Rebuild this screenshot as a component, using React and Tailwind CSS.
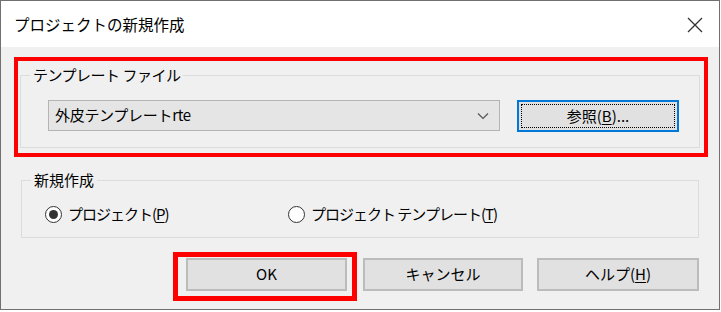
function Btn({ children, className = "" }) {
  return (
    <button
      className={
        "h-[33px] bg-[#e1e1e1] border-2 border-[#bcbcbc] text-[15px] text-black flex items-center justify-center " +
        className
      }
    >
      {children}
    </button>
  );
}

function Radio({ checked, children }) {
  return (
    <label className="flex items-center gap-[6px] text-[15px] leading-[18px]">
      <span className="w-[17px] h-[17px] rounded-full border border-[#333333] bg-white flex items-center justify-center">
        {checked && <span className="w-[9px] h-[9px] rounded-full bg-[#333333]" />}
      </span>
      <span className="tracking-[-1px]">{children}</span>
    </label>
  );
}

export default function App() {
  return (
    <div className="w-[721px] h-[312px] bg-white font-['Noto_Sans_CJK_JP',sans-serif] text-black">
      <div className="w-[720px] h-[310px] border border-[#707070] flex flex-col">
        {/* title bar */}
        <div className="h-[46px] bg-white flex items-center justify-between pl-[13px] pr-[16px]">
          <span className="text-[15.5px] pt-[1px]">プロジェクトの新規作成</span>
          <svg width="16" height="16" viewBox="0 0 16 16" className="mt-[2px]">
            <path d="M1 1 L15 15 M15 1 L1 15" stroke="#333" strokeWidth="1.3" fill="none" />
          </svg>
        </div>

        <div className="flex-1 bg-[#f0f0f0] pt-[10px]">
          {/* template file */}
          <div className="ml-[13px] w-[694px] h-[100px] border-4 border-[#ff0000] pt-[5px] pl-[2px]">
            <fieldset className="w-[680px] h-[82px] border border-[#dcdcdc] pl-[9px]">
              <legend className="px-[3px] text-[15px] leading-[18px] tracking-[-0.5px]">テンプレート ファイル</legend>
              <div className="flex mt-[16px] ml-[18px]">
                <div className="w-[452px] h-[31px] bg-[#e5e5e5] border border-[#b4b4b4] flex items-center justify-between pl-[6px] pr-[10px] text-[15px]">
                  <span className="tracking-[-0.3px]">外皮テンプレートrte</span>
                  <svg width="12" height="8" viewBox="0 0 12 8">
                    <path d="M1 1.5 L6 6.5 L11 1.5" stroke="#555" strokeWidth="1.2" fill="none" />
                  </svg>
                </div>
                <div className="ml-[17px] w-[162px] h-[32px] bg-[#e1e1e1] border-2 border-[#0078d7] p-[2px]">
                  <div className="w-full h-full border border-dotted border-black flex items-center justify-center text-[15px]">
                    参照(<span className="underline underline-offset-2">B</span>)...
                  </div>
                </div>
              </div>
            </fieldset>
          </div>

          {/* new */}
          <fieldset className="mt-[14px] ml-[20px] w-[678px] h-[67px] border border-[#dcdcdc] pl-[9px]">
            <legend className="px-[3px] text-[15px] leading-[18px]">新規作成</legend>
            <div className="flex mt-[16px] ml-[14px]">
              <div className="w-[243px]">
                <Radio checked>
                  プロジェクト(<span className="underline underline-offset-2">P</span>)
                </Radio>
              </div>
              <Radio>
                プロジェクト テンプレート(<span className="underline underline-offset-2">T</span>)
              </Radio>
            </div>
          </fieldset>

          {/* buttons */}
          <div className="flex items-start mt-[14px] ml-[172px]">
            <div className="w-[184px] h-[49px] border-[5px] border-[#ff0000] pl-[8px] pt-[1px]">
              <Btn className="w-[161px]">OK</Btn>
            </div>
            <Btn className="ml-[6px] mt-[6px] w-[160px]">キャンセル</Btn>
            <Btn className="ml-[14px] mt-[6px] w-[162px]">
              ヘルプ(<span className="underline underline-offset-2">H</span>)
            </Btn>
          </div>
        </div>
      </div>
    </div>
  );
}
